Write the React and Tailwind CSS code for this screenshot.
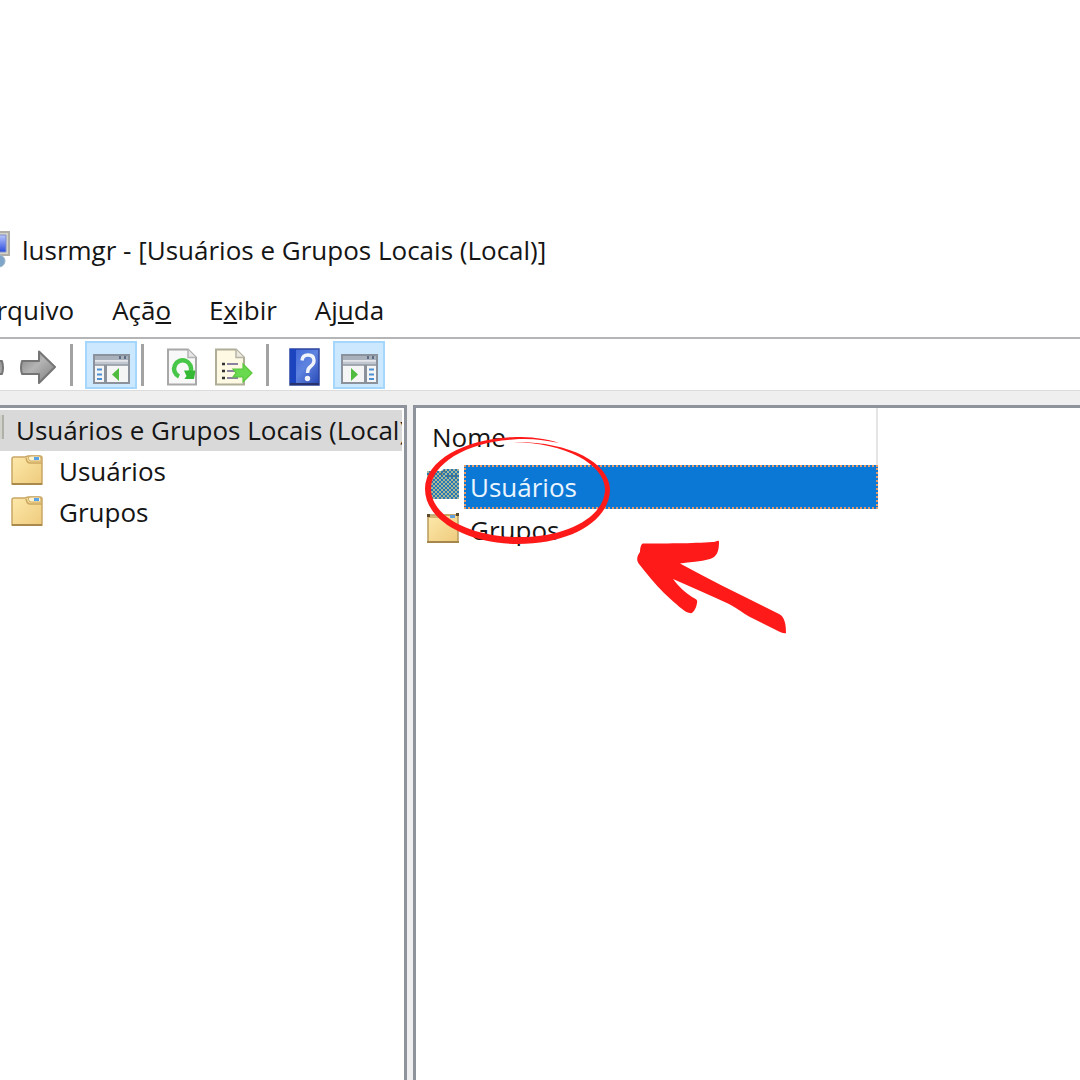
import React from "react";

function ComputerIcon() {
  return (
    <svg className="h-10 w-8 shrink-0" viewBox="0 0 32 40" aria-hidden="true">
      <defs>
        <linearGradient id="screen" x1="0" y1="0" x2="0" y2="1">
          <stop offset="0" stopColor="#b9c6fb" />
          <stop offset="1" stopColor="#2a4ce0" />
        </linearGradient>
      </defs>
      <path d="M2 2h27v23H2z" fill="#d5d2c8" stroke="#b1aea5" strokeWidth="2" />
      <path d="M5 5h21v17H5z" fill="url(#screen)" stroke="#7f8fc9" />
      <circle cx="19" cy="31" r="6" fill="#7fa6c8" stroke="#9db6c9" />
    </svg>
  );
}

function FolderIcon({ open = false }) {
  return (
    <svg className="block h-8 w-8 shrink-0" viewBox="0 0 32 32" aria-hidden="true">
      <defs>
        <linearGradient id="folder" x1="0" y1="0" x2="1" y2="1">
          <stop offset="0" stopColor="#fde9ab" />
          <stop offset="1" stopColor="#eecb7d" />
        </linearGradient>
      </defs>
      {open ? (
        <>
          <path d="M1 2h30v27H1z" fill="url(#folder)" stroke="#b99b5c" strokeWidth="1.5" />
          <path d="M1 4h15l3-2h12" fill="none" stroke="#c7a563" strokeWidth="1.5" />
          <path d="M23 2h5v3h-5z" fill="#5f9fe0" />
          <path d="M0 1h3v3H0zM29 0h3v3h-3z" fill="#5b4a2c" />
          <path d="M0 29h32" stroke="#a5874b" strokeWidth="2" />
        </>
      ) : (
        <>
          <path
            d="M1 4q0-2 2-2h11l3-1h12q2 0 2 2v26H1z"
            fill="url(#folder)"
            stroke="#c9a765"
            strokeWidth="1.5"
          />
          <path d="M15 3q1 5 4 5h12" fill="none" stroke="#cda961" strokeWidth="1.5" />
          <path d="M17 3q1-2 3-2h8q2 0 2 3v2H19z" fill="#fdf3d0" stroke="#cda961" />
          <path d="M23 2h5v3h-5z" fill="#58a3e8" />
          <path d="M1 29h30" stroke="#a98a4c" strokeWidth="2" />
        </>
      )}
    </svg>
  );
}

function SelectedFolderIcon() {
  return (
    <svg className="block h-8 w-8 shrink-0" viewBox="0 0 32 32" aria-hidden="true">
      <defs>
        <pattern id="hatch" width="4" height="4" patternUnits="userSpaceOnUse">
          <rect width="4" height="4" fill="#aab695" />
          <rect width="2" height="2" fill="#2478b4" />
          <rect x="2" y="2" width="2" height="2" fill="#2478b4" />
        </pattern>
      </defs>
      <path d="M0 2h14l3-2h15v30H0z" fill="url(#hatch)" />
      <path d="M14 6q1-3 4-4M20 7h10" fill="none" stroke="#5d6f70" strokeWidth="2" strokeDasharray="2 2" />
    </svg>
  );
}

function ArrowIcon() {
  return (
    <svg className="h-9 w-9" viewBox="0 0 36 36" aria-hidden="true">
      <defs>
        <linearGradient id="steel" x1="0" y1="0" x2="1" y2="1">
          <stop offset="0" stopColor="#808080" />
          <stop offset=".45" stopColor="#b4b4b4" />
          <stop offset="1" stopColor="#7c7c7c" />
        </linearGradient>
      </defs>
      <path
        d="M2 12h17V2.500L35 18 19 34V25H2q-2-6 0-13z"
        fill="url(#steel)"
        stroke="#757575"
        strokeWidth="2"
        strokeLinejoin="round"
      />
    </svg>
  );
}

function PaneIcon({ right = false }) {
  return (
    <svg className="h-8 w-10" viewBox="0 0 40 32" aria-hidden="true">
      <path d="M3 2h35v28H3z" fill="#f5f5f5" stroke="#8b929b" strokeWidth="2" />
      <path d="M4 3h33v4H4z" fill="#a9b1bd" />
      <path d="M28 3h2v3h-2zM33 3h2v3h-2z" fill="#5d6b84" />
      <path d="M4 7.500h33" stroke="#e3e6ea" />
      <path d="M4 8.500h33v3H4z" fill="#bfc6cf" />
      <path d="M3 12h35" stroke="#8b929b" strokeWidth="1.500" />
      {right ? (
        <>
          <path d="M25 12h3v18h-3z" fill="#8b929b" />
          <path d="M12 15v13l7-6.500z" fill="#4fbb3f" />
          <path d="M30 16.500h5M30 21.500h5M30 26h5" stroke="#4c8fd2" strokeWidth="2" />
        </>
      ) : (
        <>
          <path d="M13 12h3v18h-3z" fill="#8b929b" />
          <path d="M28 15v13l-7-6.500z" fill="#4fbb3f" />
          <path d="M6 16.500h5M6 21.500h5M6 26h5" stroke="#4c8fd2" strokeWidth="2" />
        </>
      )}
    </svg>
  );
}

function RefreshIcon() {
  return (
    <svg className="h-10 w-8" viewBox="0 0 32 40" aria-hidden="true">
      <path d="M2 2.500h20l8 8V37.500H2z" fill="#f8f8f8" stroke="#a8a8a8" strokeWidth="2" />
      <path d="M22 2.500v8h8" fill="#e6e6e6" stroke="#b3b3b3" strokeWidth="1.500" />
      <path d="M13 29.500A8.500 8.500 0 1 1 24.500 25" fill="none" stroke="#48c648" strokeWidth="4.500" />
      <path d="M18 23.500h11.500L28 32h-9.500l2-3z" fill="#35b935" />
    </svg>
  );
}

function ExportIcon() {
  return (
    <svg className="h-10 w-10" viewBox="0 0 40 40" aria-hidden="true">
      <path d="M2 2.500h20l8 8V37.500H2z" fill="#fdf9e3" stroke="#b0ad98" strokeWidth="2" />
      <path d="M22 2.500v8h8" fill="#eceadf" stroke="#b5b3a8" strokeWidth="1.500" />
      <path d="M8 17h3M8 24h3M8 31h3" stroke="#333" strokeWidth="2.500" />
      <path d="M13 17h11M13 24h8M13 31h11" stroke="#8b84a0" strokeWidth="2" />
      <path
        d="M19 22h10V17l9 9-9 9V30H19l3-4z"
        fill="#69d950"
        stroke="#5bc63c"
        strokeWidth="1.200"
      />
    </svg>
  );
}

function HelpIcon() {
  return (
    <svg className="h-10 w-8" viewBox="0 0 32 40" aria-hidden="true">
      <defs>
        <linearGradient id="book" x1="0" y1="0" x2="1" y2="1">
          <stop offset="0" stopColor="#3a63d8" />
          <stop offset=".5" stopColor="#5f83df" />
          <stop offset="1" stopColor="#2546b5" />
        </linearGradient>
      </defs>
      <path d="M1 2h29v36H1z" fill="url(#book)" stroke="#2c46a0" strokeWidth="1.500" />
      <path d="M1 2h6v36H1z" fill="#1d44bf" />
      <path d="M1 36h29v2H1z" fill="#273268" />
      <path
        d="M13 13.500Q13.500 8 19 8q6 0 6 5.500 0 3.500-3.500 6-3 2.200-3 6.500"
        fill="none"
        stroke="#f2f4fb"
        strokeWidth="3.400"
      />
      <circle cx="18.500" cy="31.500" r="2.700" fill="#f2f4fb" />
    </svg>
  );
}

function Separator() {
  return <div className="h-[42px] w-[3px] shrink-0 bg-[#a2a2a2]" />;
}

function ToggleButton({ label, children }) {
  return (
    <button
      type="button"
      aria-label={label}
      aria-pressed="true"
      className="flex h-12 w-[52px] shrink-0 items-center justify-center border-2 border-[#a5d6fc] bg-[#cce8ff] pt-2"
    >
      {children}
    </button>
  );
}

function Annotation() {
  return (
    <svg
      className="pointer-events-none absolute left-2 top-6 h-[210px] w-[370px]"
      viewBox="424 432 370 210"
      aria-hidden="true"
    >
      <path
        fill="#ff1a1a"
        d="M559 443C545 438 530 437 516 437C468 438 425 459 425 489C425 521 469 544 518 544C570 544 610 521 610 489C609 462 568 441 513 442C566 443 604 464 605 489C605 517 566 538 518 537C470 537 431 516 431 489C431 463 468 442 513 439.500C530 438 545 440 559 443Z"
      />
      <path
        fill="#ff1a1a"
        d="M643 543.500C660 543.500 695 543.500 712 542C716 542 719 539 719 542C719 551 717 557 710 559C700 562 690 562 680 563.500C712 581 747 598 779 614C785 617 786 625 786 633C784 634 780 632 776 630L749 616.500C743 613 737 608 729 604C711 596 692 587 673 579C678 586 686 593 692 597C695 599 698 599 697 603C696 609 693 614 690 613C685 613 674 602 664 593C655 584 646 573 639 564C636 560 637 556 640 552C640 548 641 544 643 543.500Z"
      />
    </svg>
  );
}

export default function App() {
  return (
    <div className="flex h-screen flex-col overflow-hidden bg-white pt-[221px] font-['Open_Sans','Noto_Sans',sans-serif] text-[26px] leading-9 text-[#151515]">
      <header className="-ml-5 flex h-[60px] shrink-0 items-center gap-2.5 whitespace-nowrap pb-0.5">
        <ComputerIcon />
        <h1>lusrmgr - [Usuários e Grupos Locais (Local)]</h1>
      </header>

      <nav className="-ml-5 flex h-14 shrink-0 items-center gap-[38px] whitespace-nowrap pt-0.5">
        <button type="button"><u>A</u>rquivo</button>
        <button type="button">Açã<u>o</u></button>
        <button type="button">E<u>x</u>ibir</button>
        <button type="button">Aj<u>u</u>da</button>
      </nav>

      <div className="flex h-[54px] shrink-0 items-center border-b border-t-2 border-b-[#dcdcdc] border-t-[#b5b5b8]">
        <button type="button" aria-label="Voltar" className="-ml-8 shrink-0 -scale-x-100 pt-1">
          <ArrowIcon />
        </button>
        <button type="button" aria-label="Avançar" className="ml-4 mr-3.5 shrink-0 pt-1">
          <ArrowIcon />
        </button>
        <Separator />
        <div className="ml-3 mr-1">
          <ToggleButton label="Mostrar árvore do console"><PaneIcon /></ToggleButton>
        </div>
        <Separator />
        <button type="button" aria-label="Atualizar" className="ml-[22px] shrink-0 pt-1"><RefreshIcon /></button>
        <button type="button" aria-label="Exportar lista" className="ml-4 mr-3 shrink-0 pt-1"><ExportIcon /></button>
        <Separator />
        <button type="button" aria-label="Ajuda" className="ml-5 mr-3 shrink-0 pt-1"><HelpIcon /></button>
        <ToggleButton label="Mostrar painel de ações"><PaneIcon right /></ToggleButton>
      </div>

      <main className="flex min-h-0 grow gap-1.5 bg-[#efefef] pt-3.5">
        <aside className="w-[407px] shrink-0 border-r-[3px] border-t-[3px] border-[#8f949c] bg-white pr-0.5 pt-0.5">
          <ul>
            <li className="flex h-[41px] items-center overflow-hidden whitespace-nowrap bg-[#d9d9d9] pb-0.5">
              <span className="mb-1.5 mr-3 h-6 w-1 shrink-0 border-r-2 border-[#b0b0a8] bg-[#d2d2cc]" />
              <span>Usuários e Grupos Locais (Local)</span>
            </li>
            <li className="flex h-[41px] items-center gap-4 pb-0.5 pl-[11px]"><FolderIcon />Usuários</li>
            <li className="flex h-[41px] items-center gap-4 pb-0.5 pl-[11px]"><FolderIcon />Grupos</li>
          </ul>
        </aside>

        <section className="relative min-w-0 grow border-l-[3px] border-t-[3px] border-[#8f949c] bg-white">
          <table className="w-[462px] border-separate border-spacing-0">
            <thead>
              <tr className="h-[57px]">
                <th colSpan={2} className="border-r-2 border-[#e5e5e5] pl-4 text-left font-normal">Nome</th>
              </tr>
            </thead>
            <tbody>
              <tr className="h-[44px]">
                <td className="w-12 pb-1 pl-[11px]"><SelectedFolderIcon /></td>
                <td className="border-2 border-dotted border-[#e79a66] bg-[#0c78d6] pl-1 text-[#eaf4fd]">Usuários</td>
              </tr>
              <tr className="h-[42px]">
                <td className="pb-0.5 pl-[11px]"><FolderIcon open /></td>
                <td className="pl-1.5">Grupos</td>
              </tr>
            </tbody>
          </table>
          <Annotation />
        </section>
      </main>
    </div>
  );
}
